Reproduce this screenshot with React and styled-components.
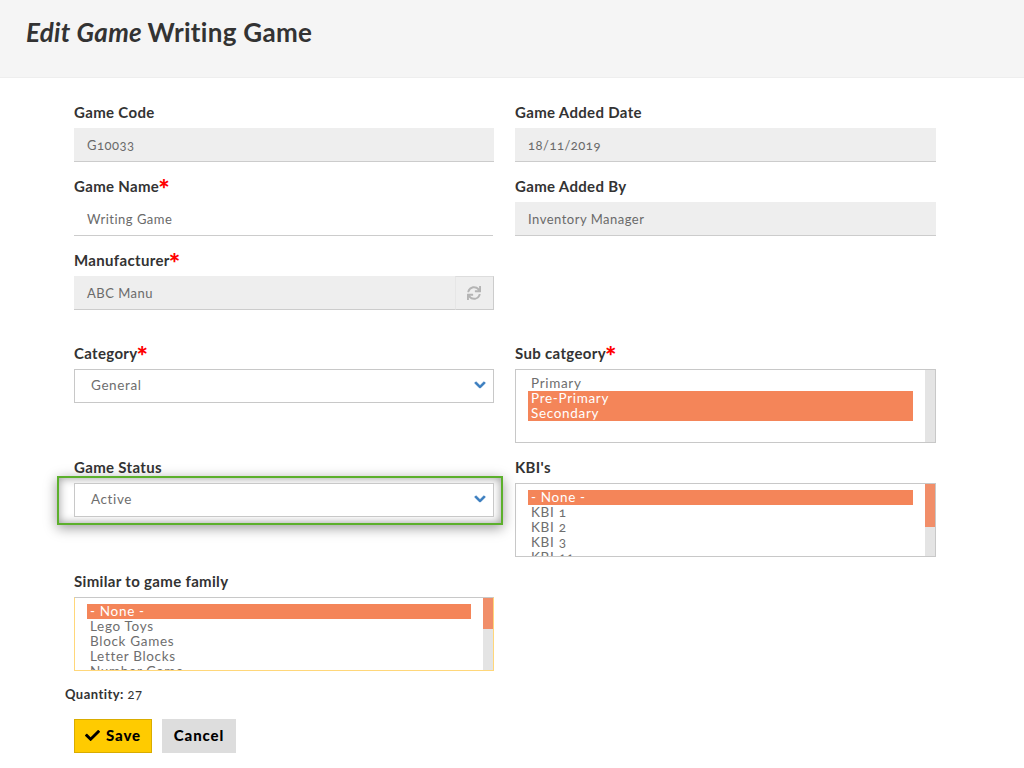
import React from "react";
import styled, { createGlobalStyle } from "styled-components";
import { FaSync, FaChevronDown, FaCheck } from "react-icons/fa";

const Global = createGlobalStyle`
  html, body { margin: 0; padding: 0; background: #fff; }
  body { font-family: "Lato", "Open Sans", sans-serif; color: #333; font-variant-numeric: oldstyle-nums; }
  * { box-sizing: border-box; }
`;

const Header = styled.header`
  height: 78px;
  background: #f5f5f5;
  border-bottom: 1px solid #eee;
  padding: 17px 26px 0;
`;
const Title = styled.h1`
  margin: 0;
  font-size: 26px;
  line-height: 30px;
  font-weight: 700;
  color: #333;
  letter-spacing: 0.3px;
  em { font-style: italic; margin-right: -1px; }
`;
const Form = styled.form`
  padding: 20px 0 0 74px;
`;
const FormGrid = styled.div`
  display: grid;
  grid-template-columns: 420px 421px;
  column-gap: 21px;
  row-gap: 10px;
  margin-top: ${(p) => p.$top || 0}px;
`;
const Field = styled.div`
  display: flex;
  flex-direction: column;
  min-width: 0;
`;
const Label = styled.label`
  height: 30px;
  line-height: 29px;
  font-size: 15px;
  font-weight: 700;
  color: #333;
  letter-spacing: 0.33px;
  white-space: nowrap;
`;
const Star = styled.span`
  display: inline-block;
  color: #f00;
  font-size: 27px;
  height: 16px;
  line-height: 33px;
  font-weight: 900;
  vertical-align: top;
  margin-left: -1px;
`;
const Input = styled.div`
  height: 34px;
  display: flex;
  align-items: center;
  margin-right: ${(p) => (p.$plain ? 1 : 0)}px;
  padding-left: 13px;
  font-size: 13px;
  letter-spacing: 0.5px;
  color: #6a6a6a;
  background: ${(p) => (p.$plain ? "#fff" : "#eee")};
  border-bottom: 1px solid #ccc;
`;
const InputGroup = styled.div`
  display: flex;
  height: 34px;
`;
const GroupInput = styled(Input)`
  flex: 1;
`;
const Addon = styled.div`
  width: 39px;
  display: flex;
  align-items: center;
  justify-content: center;
  padding-right: 2px;
  background: #eee;
  border: 1px solid #ccc;
  border-left-color: #e6e6e6;
  border-top-color: #ddd;
  color: #b4b4b4;
  font-size: 14px;
`;
const SelectWrap = styled.div`
  position: relative;
`;
const Highlight = styled.div`
  position: absolute;
  inset: -7px -9px -8px -17px;
  border: 2px solid #5cb02c;
  box-shadow: 0 3px 12px rgba(0, 0, 0, 0.4), inset 0 0 10px rgba(0, 0, 0, 0.4);
`;
const Select = styled.div`
  position: relative;
  height: 34px;
  display: flex;
  align-items: center;
  justify-content: space-between;
  padding: 0 7px 2px 16px;
  background: #fff;
  border: 1px solid #c8c8c8;
  font-size: 13.5px;
  letter-spacing: 0.6px;
  color: #6e6e6e;
  svg {
    color: #3a7dbf;
    font-size: 12px;
    stroke: currentColor;
    stroke-width: 40;
    overflow: visible;
  }
`;
const ListBox = styled.div`
  height: ${(p) => p.$h || 74}px;
  display: flex;
  border: 1px solid #c8c8c8;
  border-left-color: ${(p) => (p.$warm ? "#ffd77a" : "#c8c8c8")};
  border-right-color: ${(p) => (p.$warm ? "#ffd77a" : "#c8c8c8")};
  border-bottom-color: ${(p) => (p.$warm ? "#ffd77a" : "#c8c8c8")};
  overflow: hidden;
`;
const Options = styled.div`
  flex: 1;
  min-width: 0;
  padding: 6px 12px 0 12px;
  overflow: hidden;
`;
const Option = styled.div`
  height: 15px;
  line-height: 15px;
  padding-left: 3px;
  font-size: 13.5px;
  letter-spacing: 0.68px;
  white-space: nowrap;
  color: ${(p) => (p.$on ? "#fff" : "#6e6e6e")};
  background: ${(p) => (p.$on ? "#f48559" : "transparent")};
`;
const Track = styled.div`
  width: 10px;
  background: #e4e4e4;
`;
const Thumb = styled.div`
  height: ${(p) => p.$h}px;
  background: #f18e69;
`;
const Quantity = styled.div`
  margin: 15px 0 0 -9px;
  height: 16px;
  line-height: 16px;
  font-size: 13px;
  letter-spacing: 0.45px;
  b { font-weight: 700; }
`;
const Buttons = styled.div`
  display: flex;
  gap: 10px;
  margin-top: 17px;
`;
const Button = styled.button`
  height: 34px;
  width: ${(p) => p.$w}px;
  display: flex;
  align-items: center;
  justify-content: center;
  gap: 6px;
  padding: 0 0 2px;
  font-family: inherit;
  font-size: 15px;
  font-weight: 900;
  letter-spacing: 0.9px;
  color: #000;
  background: ${(p) => p.$bg};
  border: 1px solid ${(p) => p.$line};
  svg { font-size: 15px; margin-top: 1px; }
`;

const List = ({ items, on = [], thumb, warm, h }) => (
  <ListBox $warm={warm} $h={h}>
    <Options>
      {items.map((t) => (
        <Option key={t} $on={on.includes(t)}>{t}</Option>
      ))}
    </Options>
    <Track>{thumb ? <Thumb $h={thumb} /> : null}</Track>
  </ListBox>
);

export default function App() {
  return (
    <>
      <Global />
      <Header>
        <Title><em>Edit Game</em> Writing Game</Title>
      </Header>
      <Form>
        <FormGrid>
          <Field>
            <Label>Game Code</Label>
            <Input>G10033</Input>
          </Field>
          <Field>
            <Label>Game Added Date</Label>
            <Input>18/11/2019</Input>
          </Field>
          <Field>
            <Label>Game Name<Star>*</Star></Label>
            <Input $plain>Writing Game</Input>
          </Field>
          <Field>
            <Label>Game Added By</Label>
            <Input>Inventory Manager</Input>
          </Field>
          <Field>
            <Label>Manufacturer<Star>*</Star></Label>
            <InputGroup>
              <GroupInput>ABC Manu</GroupInput>
              <Addon><FaSync /></Addon>
            </InputGroup>
          </Field>
        </FormGrid>
        <FormGrid $top={29}>
          <Field>
            <Label>Category<Star>*</Star></Label>
            <Select>General<FaChevronDown /></Select>
          </Field>
          <Field>
            <Label>Sub catgeory<Star>*</Star></Label>
            <List items={["Primary", "Pre-Primary", "Secondary"]} on={["Pre-Primary", "Secondary"]} />
          </Field>
          <Field>
            <Label>Game Status</Label>
            <SelectWrap>
              <Highlight />
              <Select>Active<FaChevronDown /></Select>
            </SelectWrap>
          </Field>
          <Field>
            <Label>KBI's</Label>
            <List items={["- None -", "KBI 1", "KBI 2", "KBI 3", "KBI 11"]} on={["- None -"]} thumb={43} />
          </Field>
          <Field>
            <Label>Similar to game family</Label>
            <List items={["- None -", "Lego Toys", "Block Games", "Letter Blocks", "Number Game"]} on={["- None -"]} thumb={31} warm />
          </Field>
        </FormGrid>
        <Quantity><b>Quantity:</b> 27</Quantity>
        <Buttons>
          <Button $w={78} $bg="#ffcb00" $line="#d9ac00"><FaCheck />Save</Button>
          <Button $w={74} $bg="#ddd" $line="#ddd">Cancel</Button>
        </Buttons>
      </Form>
    </>
  );
}
